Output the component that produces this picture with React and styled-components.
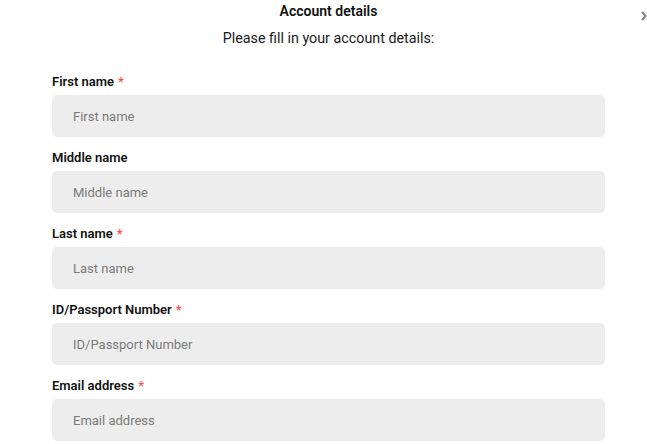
import React from "react";
import styled, { createGlobalStyle } from "styled-components";

const Global = createGlobalStyle`
  html, body { margin: 0; padding: 0; background: #fff; }
  body { font-family: Roboto, "Noto Sans", Arial, sans-serif; color: #1a1a1a; }
  * { box-sizing: border-box; }
`;

const Page = styled.div`
  position: relative;
  width: 647px;
  height: 444px;
  overflow: hidden;
  padding: 0 42px 0 52px;
`;

const Title = styled.h1`
  margin: 0;
  font-size: 14px;
  font-weight: 600;
  line-height: 22px;
  text-align: center;
  color: #111;
`;

const Subtitle = styled.p`
  margin: 5px 0 23px;
  font-size: 14.3px;
  font-weight: 400;
  line-height: 22px;
  text-align: center;
  color: #1a1a1a;
`;

const Form = styled.form`
  display: flex;
  flex-direction: column;
  gap: 11px;
`;

const Field = styled.div`
  display: flex;
  flex-direction: column;
  gap: 4px;
`;

const Label = styled.label`
  padding-top: 1px;
  font-size: 13px;
  font-weight: 600;
  line-height: 18px;
  color: #111;
`;

const Star = styled.span`
  color: #ff4d4f;
  margin-left: 4px;
`;

const Input = styled.input`
  height: 42px;
  width: 100%;
  border: none;
  border-radius: 5px;
  background: #ededed;
  padding: 0 21px;
  font-family: inherit;
  font-size: 13px;
  color: #222;
  outline: none;
  &::placeholder { color: #7b7b7b; }
`;

const Chevron = styled.svg`
  position: absolute;
  top: 11px;
  left: 641px;
`;

const fields = [
  { label: "First name", req: true },
  { label: "Middle name", req: false },
  { label: "Last name", req: true },
  { label: "ID/Passport Number", req: true },
  { label: "Email address", req: true },
];

export default function App() {
  return (
    <>
      <Global />
      <Page>
        <Title>Account details</Title>
        <Subtitle>Please fill in your account details:</Subtitle>
        <Form>
          {fields.map((f) => (
            <Field key={f.label}>
              <Label>
                {f.label}
                {f.req && <Star>*</Star>}
              </Label>
              <Input placeholder={f.label} />
            </Field>
          ))}
        </Form>
        <Chevron width="6" height="10" viewBox="0 0 6 10">
          <path d="M1 1 L4.5 5 L1 9" fill="none" stroke="#8a8a8a" strokeWidth="2.2" />
        </Chevron>
      </Page>
    </>
  );
}
